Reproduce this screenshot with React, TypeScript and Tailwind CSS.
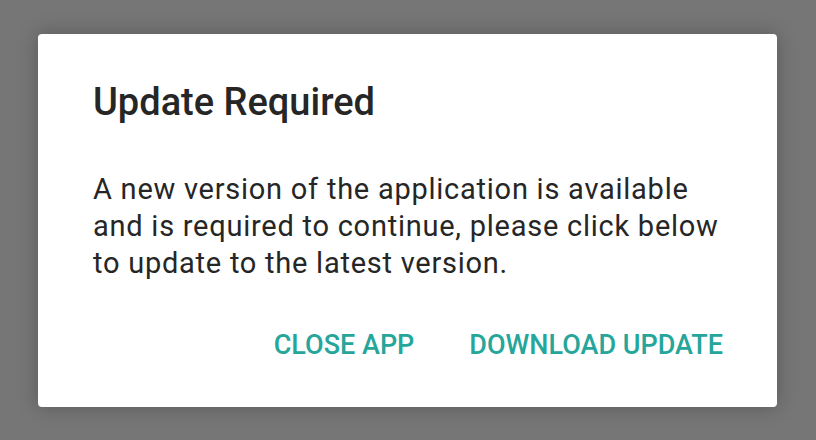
export default function App() {
  return (
    <div className="flex h-[440px] w-[816px] items-start bg-[#767676] pl-[38px] pt-[34px] font-['Roboto',sans-serif]">
      <div className="flex h-[373px] w-[739px] flex-col rounded-[4px] bg-white shadow-[0_0_20px_rgba(0,0,0,0.25)]">
        <div className="pl-[55px] pr-[50px] pt-[46px]">
          <h2 className="text-[38px] font-medium leading-[44px] text-[#262626]">Update Required</h2>
          <p className="mt-[47px] text-[29px] leading-[37px] tracking-[0.75px] text-[#262626]">
            A new version of the application is available and is required to continue, please click below to update
            to the latest version.
          </p>
        </div>
        <div className="mt-auto flex justify-end gap-[55px] pb-[46px] pr-[54px]">
          <button className="text-[27px] font-medium uppercase leading-[32px] text-[#26a69a]">Close App</button>
          <button className="text-[27px] font-medium uppercase leading-[32px] text-[#26a69a]">Download Update</button>
        </div>
      </div>
    </div>
  );
}
